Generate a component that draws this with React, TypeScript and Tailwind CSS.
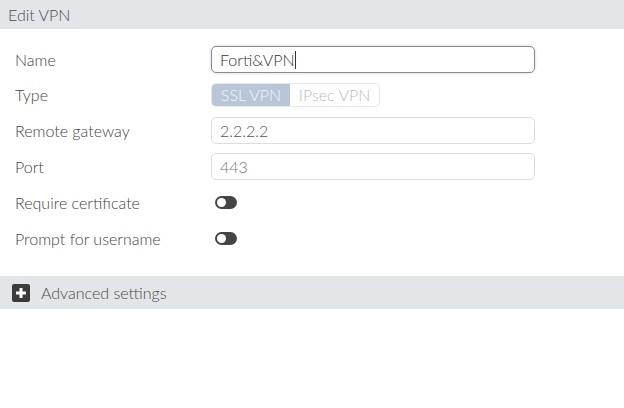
import React from 'react';

const Toggle = () => (
    <div className="w-[22px] h-[13px] rounded-full bg-[#454545] flex items-center pl-[2px]">
        <div className="w-[9px] h-[9px] rounded-full bg-white" />
    </div>
);

const Row: React.FC<{ label: string; children: React.ReactNode; h?: string }> = ({ label, children, h = 'h-[27px]' }) => (
    <div className={`flex items-center ${h}`}>
        <div className="w-[211px] pl-[15px] text-[16px] text-[#444]">{label}</div>
        <div className="flex-1 flex items-center">{children}</div>
    </div>
);

export default function App() {
    return (
        <div className="w-[624px] h-[408px] bg-white font-['Lato','Liberation_Sans',sans-serif] font-light">
            <div className="h-[29px] bg-[#e3e6e9] flex items-center pl-[8px] text-[16px] text-[#4a4a4a]">Edit VPN</div>

            <div className="flex flex-col gap-[9px] pt-[17px] pr-[89px]">
                <Row label="Name">
                    <div className="w-full h-[27px] rounded-[5px] border border-[#8a8a8a] shadow-[0_0_3px_rgba(0,0,0,0.2)] flex items-center pl-[8px] text-[16px] text-[#333]">
                        Forti&amp;VPN<span className="w-px h-[18px] bg-[#333]" />
                    </div>
                </Row>
                <Row label="Type" h="h-[26px]">
                    <div className="flex h-[24px] rounded-[5px] border border-[#e8e8e8] overflow-hidden text-[16px]">
                        <div className="w-[78px] bg-[#b9c6d8] text-[#f2f5fa] flex items-center justify-center">SSL VPN</div>
                        <div className="w-[89px] text-[#bdbdbd] flex items-center justify-center">IPsec VPN</div>
                    </div>
                </Row>
                <Row label="Remote gateway">
                    <div className="w-full h-[27px] rounded-[5px] border border-[#dedede] flex items-center pl-[8px] text-[16px] text-[#555]">2.2.2.2</div>
                </Row>
                <Row label="Port">
                    <div className="w-full h-[27px] rounded-[5px] border border-[#dedede] flex items-center pl-[8px] text-[16px] text-[#777]">443</div>
                </Row>
                <Row label="Require certificate">
                    <div className="pl-[4px]"><Toggle /></div>
                </Row>
                <Row label="Prompt for username">
                    <div className="pl-[4px]"><Toggle /></div>
                </Row>
            </div>

            <div className="mt-[24px] h-[33px] bg-[#e3e6e9] flex items-center pl-[12px] gap-[11px]">
                <div className="w-[18px] h-[18px] rounded-[2px] bg-[#3c3c3c] flex items-center justify-center">
                    <svg width="12" height="12" viewBox="0 0 12 12">
                        <rect x="4.5" y="1" width="3" height="10" fill="white" />
                        <rect x="1" y="4.5" width="10" height="3" fill="white" />
                    </svg>
                </div>
                <span className="text-[16px] text-[#4a4a4a]">Advanced settings</span>
            </div>
        </div>
    );
}
